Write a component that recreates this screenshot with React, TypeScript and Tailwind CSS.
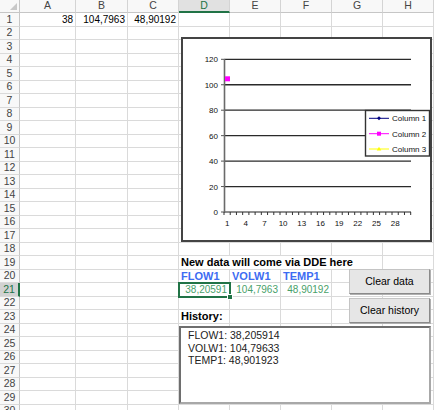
import React from "react";

const COLS = ["A", "B", "C", "D", "E", "F", "G", "H"];
const COL_W = [
  "w-[56px]",
  "w-[52px]",
  "w-[51px]",
  "w-[51px]",
  "w-[51px]",
  "w-[51px]",
  "w-[51px]",
  "w-[51px]",
];

type Cell = { text: string; cls: string; overflow?: boolean };

const plain = "justify-end text-[10px] text-black";
const label = "font-bold text-[11px] text-black";
const blue = "font-bold text-[11px] text-[#3d6cf2]";
const green = "justify-end text-[10px] text-[#4a9f6a]";

const cells: Record<number, Record<string, Cell>> = {
  1: {
    A: { text: "38", cls: plain },
    B: { text: "104,7963", cls: plain },
    C: { text: "48,90192", cls: plain },
  },
  19: {
    D: { text: "New data will come via DDE here", cls: label, overflow: true },
  },
  20: {
    D: { text: "FLOW1", cls: blue },
    E: { text: "VOLW1", cls: blue },
    F: { text: "TEMP1", cls: blue },
  },
  21: {
    D: { text: "38,20591", cls: green },
    E: { text: "104,7963", cls: green },
    F: { text: "48,90192", cls: green },
  },
  23: {
    D: { text: "History:", cls: label },
  },
};

const HeaderRow = () => (
  <div className="flex h-[13px]">
    <div className="relative w-[20px] shrink-0 bg-[#f8f8f8] border-r border-b border-[#c6c6c6]">
      <svg className="absolute right-[2px] bottom-[2px]" width="7" height="7">
        <polygon points="7,0 7,7 0,7" fill="#c8c8c8" />
      </svg>
    </div>
    {COLS.map((c, i) => (
      <div
        key={c}
        className={`${COL_W[i]} shrink-0 flex items-center justify-center text-[10.5px] border-r border-r-[#d4d4d4] ${
          c === "D"
            ? "bg-[#e1e1e1] text-[#217346] border-b-2 border-b-[#217346]"
            : "bg-[#f8f8f8] text-[#444] border-b border-b-[#c6c6c6]"
        }`}
      >
        {c}
      </div>
    ))}
  </div>
);

const Row = ({ n }: { n: number }) => {
  const active = n === 21;
  return (
    <div className={`flex ${n % 2 ? "h-[14px]" : "h-[13px]"}`}>
      <div
        className={`w-[20px] shrink-0 flex items-center justify-center text-[10.5px] border-b border-b-[#dadada] ${
          active
            ? "bg-[#d2d2d2] text-[#217346] border-r-2 border-r-[#217346]"
            : "bg-[#f8f8f8] text-[#444] border-r border-r-[#c6c6c6]"
        }`}
      >
        {n}
      </div>
      {COLS.map((c, i) => {
        const cell = cells[n]?.[c];
        return (
          <div
            key={c}
            className={`${COL_W[i]} shrink-0 flex items-center px-[2px] border-r border-b border-[#dadada] whitespace-nowrap overflow-visible ${
              cell ? cell.cls : ""
            }`}
          >
            {cell &&
              (cell.overflow ? (
                <span className="relative z-10 h-full flex items-center bg-white">{cell.text}</span>
              ) : (
                cell.text
              ))}
          </div>
        );
      })}
    </div>
  );
};

const yLabels = [0, 20, 40, 60, 80, 100, 120];
const gy = (v: number) => 212 - (v / 120) * 152.7;
const step = 186.7 / 30;

const Chart = () => (
  <div className="absolute left-[181px] top-[37px] w-[251px] h-[205px] border-2 border-[#444] bg-white">
    <svg
      className="absolute left-[-2px] top-[-2px]"
      width="251"
      height="205"
      viewBox="181 37 251 205"
      fontFamily="'Liberation Sans', Arial, sans-serif"
      fontSize="8"
    >
      {yLabels.slice(1).map((v) => (
        <line key={v} x1="224" x2="411" y1={gy(v)} y2={gy(v)} stroke="#2a2a2a" strokeWidth="1.3" />
      ))}
      {yLabels.map((v) => (
        <g key={v}>
          <line x1="221" x2="224" y1={gy(v)} y2={gy(v)} stroke="#555" strokeWidth="1" />
          <text x="218" y={gy(v) + 3} textAnchor="end" fill="#111">
            {v}
          </text>
        </g>
      ))}
      <line x1="224.5" x2="224.5" y1="59" y2="212.5" stroke="#6a6a6a" strokeWidth="1.6" />
      <line x1="224" x2="411" y1="212" y2="212" stroke="#6a6a6a" strokeWidth="1.6" />
      {Array.from({ length: 31 }, (_, i) => (
        <line
          key={i}
          x1={224 + i * step}
          x2={224 + i * step}
          y1="212"
          y2="215"
          stroke="#333"
          strokeWidth="1"
        />
      ))}
      {[1, 4, 7, 10, 13, 16, 19, 22, 25, 28].map((n) => (
        <text key={n} x={224 + (n - 0.5) * step} y="225.5" textAnchor="middle" fill="#111">
          {n}
        </text>
      ))}
      <rect x="225" y="76.3" width="5" height="5" fill="#ff00ff" />

      <rect x="365.5" y="110.5" width="64" height="45.5" fill="#fff" stroke="#333" strokeWidth="1.4" />
      <line x1="369" x2="389" y1="118.3" y2="118.3" stroke="#000080" strokeWidth="1" />
      <polygon points="379,116.3 381,118.3 379,120.3 377,118.3" fill="#000080" />
      <text x="392" y="121.2" fill="#111">Column 1</text>
      <line x1="369" x2="389" y1="133.7" y2="133.7" stroke="#ff00ff" strokeWidth="1" />
      <rect x="377" y="131.7" width="4" height="4" fill="#ff00ff" />
      <text x="392" y="136.6" fill="#111">Column 2</text>
      <line x1="369" x2="389" y1="149" y2="149" stroke="#ffff00" strokeWidth="1" />
      <polygon points="379,146.8 381.3,150.6 376.7,150.6" fill="#ffff00" />
      <text x="392" y="151.9" fill="#111">Column 3</text>
    </svg>
  </div>
);

const Button = ({ label }: { label: string }) => (
  <button
    type="button"
    className="w-[81px] h-[25px] bg-[#e6e6e6] border border-[#c4c4c4] border-r-[#8a8a8a] border-b-[#8a8a8a] shadow-[1px_1px_0_#b0b0b0] text-[10.5px] text-black flex items-center justify-center"
  >
    {label}
  </button>
);

export default function App() {
  return (
    <div className="relative w-[434px] h-[410px] overflow-hidden bg-white font-['Liberation_Sans',Arial,sans-serif]">
      <HeaderRow />
      {Array.from({ length: 30 }, (_, i) => (
        <Row key={i} n={i + 1} />
      ))}

      {/* floating chart object */}
      <Chart />

      {/* selected cell D21 with fill handle */}
      <div className="absolute left-[178px] top-[282px] w-[53px] h-[16px] border-2 border-[#217346] pointer-events-none">
        <div className="absolute right-[-4px] bottom-[-4px] w-[6px] h-[6px] bg-[#217346] border border-white" />
      </div>

      {/* floating form buttons */}
      <div className="absolute left-[349px] top-[269px] flex flex-col gap-[4px]">
        <Button label="Clear data" />
        <Button label="Clear history" />
      </div>

      {/* floating history text box */}
      <div className="absolute left-[179px] top-[326px] w-[252px] h-[78px] bg-white border-2 border-[#6e6e6e] border-r-[#a8a8a8] border-b-[#a8a8a8] pl-[7px] pt-[1px] text-[10.5px] leading-[12.5px] text-[#222]">
        <div>FLOW1: 38,205914</div>
        <div>VOLW1: 104,79633</div>
        <div>TEMP1: 48,901923</div>
      </div>
    </div>
  );
}
